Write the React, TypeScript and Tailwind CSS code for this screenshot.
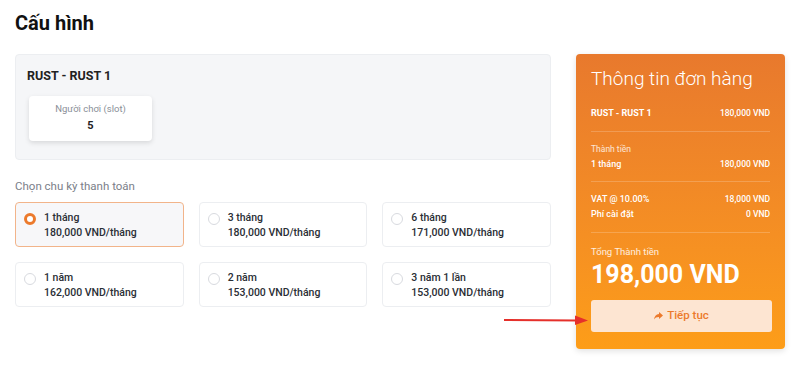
import React from "react";

const options = [
  { label: "1 tháng", price: "180,000 VND/tháng", active: true },
  { label: "3 tháng", price: "180,000 VND/tháng" },
  { label: "6 tháng", price: "171,000 VND/tháng" },
  { label: "1 năm", price: "162,000 VND/tháng" },
  { label: "2 năm", price: "153,000 VND/tháng" },
  { label: "3 năm 1 lần", price: "153,000 VND/tháng" },
];

const Row = ({ left, right, bold }: { left: string; right: string; bold?: boolean }) => (
  <div className={`flex justify-between items-center leading-[15px] ${bold ? "font-bold text-[9px]" : "font-medium text-[9px]"}`}>
    <span>{left}</span>
    <span className="text-[8.5px] font-medium">{right}</span>
  </div>
);

const App: React.FC = () => {
  return (
    <div className="relative w-[800px] h-[371px] bg-white text-[#1f2328] font-['Roboto',sans-serif] overflow-hidden">
      <h1 className="px-[15px] pt-[8px] text-[20px] leading-[30px] font-bold text-[#111]">Cấu hình</h1>
      <div className="flex gap-[25px] px-[15px] mt-[16px]">
        <div className="w-[537px]">
          <div className="h-[106px] rounded-[4px] border border-[#eceef1] bg-[#f5f6f8] px-[11px] pt-[13px]">
            <div className="text-[12.5px] font-bold leading-[16px] text-[#222]">RUST - RUST 1</div>
            <div className="mt-[12px] ml-[2px] w-[123px] h-[45px] rounded-[4px] bg-white shadow-[0_2px_5px_rgba(0,0,0,0.12)] flex flex-col items-center pt-[7px]">
              <div className="text-[9.5px] leading-[12px] text-[#8a8f98]">Người chơi (slot)</div>
              <div className="mt-[4px] text-[11px] font-bold leading-[14px] text-[#222]">5</div>
            </div>
          </div>
          <div className="mt-[18px] text-[11.5px] leading-[16px] text-[#7b8089]">Chọn chu kỳ thanh toán</div>
          <div className="mt-[8px] grid grid-cols-3 gap-x-[15px] gap-y-[15px]">
            {options.map((o, i) => (
              <div
                key={i}
                className={`h-[45px] rounded-[4px] border flex items-start pl-[8px] pt-[7px] ${
                  o.active ? "border-[#f2b48a] bg-[#f7f7f9]" : "border-[#eceef1] bg-white"
                }`}
              >
                <div className="w-[12px] h-[12px] mt-[3px] shrink-0 flex items-center justify-center">
                  {o.active ? (
                    <div className="w-[12px] h-[12px] rounded-full border-[3px] border-[#ec7a2c] bg-white" />
                  ) : (
                    <div className="w-[12px] h-[12px] rounded-full border border-[#d8dadf] bg-white" />
                  )}
                </div>
                <div className="ml-[8px] text-[10.5px] font-medium leading-[15px] text-[#2a2e35]">
                  <div>{o.label}</div>
                  <div>{o.price}</div>
                </div>
              </div>
            ))}
          </div>
        </div>
        <div className="w-[209px] h-[295px] rounded-[4px] bg-gradient-to-b from-[#e8792d] to-[#fd9d18] shadow-[0_2px_6px_rgba(0,0,0,0.12)] px-[15px] pt-[12px] text-white">
          <div className="text-[19px] font-light leading-[26px]">Thông tin đơn hàng</div>
          <div className="mt-[14px]">
            <Row left="RUST - RUST 1" right="180,000 VND" bold />
          </div>
          <div className="mt-[10px] border-t border-white/20" />
          <div className="mt-[11px] text-[8.5px] leading-[13px] text-white/80">Thành tiền</div>
          <div className="mt-[1px]">
            <Row left="1 tháng" right="180,000 VND" />
          </div>
          <div className="mt-[9px] border-t border-white/20" />
          <div className="mt-[10px]">
            <Row left="VAT @ 10.00%" right="18,000 VND" />
            <Row left="Phí cài đặt" right="0 VND" />
          </div>
          <div className="mt-[10px] border-t border-white/20" />
          <div className="mt-[12px] text-[9.5px] leading-[13px] text-white/85">Tổng Thành tiền</div>
          <div className="mt-[2px] text-[25px] font-bold leading-[30px]">198,000 VND</div>
          <button className="mt-[10px] w-[181px] h-[32px] rounded-[3px] bg-[#fde5d2] text-[#ec7a2c] text-[11.5px] font-medium flex items-center justify-center gap-[4px]">
            <svg width="9" height="8" viewBox="0 0 9 8" fill="#ec7a2c">
              <path d="M5 0 L9 3.5 L5 7 L5 5 C2.5 5 1 5.8 0 7.5 C0.3 4.5 2 2.3 5 2 Z" />
            </svg>
            Tiếp tục
          </button>
        </div>
      </div>
      <svg className="absolute left-[503px] top-[314px]" width="86" height="12" viewBox="0 0 86 12">
        <line x1="1" y1="6" x2="74" y2="6.5" stroke="#e5302b" strokeWidth="2" />
        <path d="M72 1.5 L85 6.5 L72 11 Z" fill="#e5302b" />
      </svg>
    </div>
  );
};

export default App;
